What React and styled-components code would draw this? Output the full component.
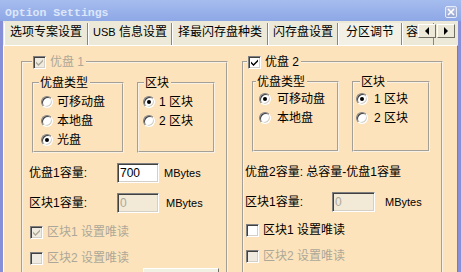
import React from "react";
import styled, { createGlobalStyle } from "styled-components";

const GlobalStyle = createGlobalStyle`
  html, body {
    margin: 0;
    padding: 0;
  }
  body {
    font-family: "Liberation Sans", "Noto Sans CJK SC", sans-serif;
    font-size: 12px;
    color: #000;
    background: #ece9d8;
  }
`;

const Window = styled.div`
  width: 461px;
  height: 272px;
  overflow: hidden;
  display: flex;
  flex-direction: column;
  background: #ece9d8;
`;

const TitleBar = styled.div`
  height: 21px;
  flex-shrink: 0;
  display: flex;
  align-items: center;
  justify-content: space-between;
  padding: 0 4px 0 5px;
  background: linear-gradient(#a5bcee, #8ea8e6);
`;

const Title = styled.span`
  font-family: "Liberation Mono", monospace;
  font-weight: bold;
  font-size: 11.5px;
  line-height: 14px;
  color: #dde6fa;
  margin-top: 5px;
`;

const CloseButton = styled.div`
  width: 12px;
  height: 12px;
  margin-top: 3px;
  box-sizing: border-box;
  border: 1px solid #e4ebfa;
  border-radius: 2px;
  background: linear-gradient(#b7c3e5, #98a6d3);
  display: flex;
  align-items: center;
  justify-content: center;
`;

const Body = styled.div`
  flex: 1;
  display: flex;
  flex-direction: column;
  border-left: 3px solid #878fd9;
  border-right: 3px solid #878fd9;
  min-height: 0;
`;

const TabStrip = styled.div`
  position: relative;
  height: 24px;
  flex-shrink: 0;
  display: flex;
  padding-left: 1px;
  overflow: hidden;
`;

const Tab = styled.div`
  flex-shrink: 0;
  margin-top: 2px;
  height: 22px;
  line-height: 18px;
  padding: 0 ${(p) => p.$pad}px;
  border-left: 1px solid #fff;
  border-right: 1px solid #8a877b;
  white-space: nowrap;
  background: ${(p) => (p.$active ? "#f3f1e6" : "#ece9d8")};
`;

const Latin = styled.span`
  font-size: 11px;
`;

const TabArrows = styled.div`
  position: absolute;
  right: 3px;
  top: 3px;
  display: flex;
  gap: 1px;
`;

const ArrowButton = styled.div`
  width: 18px;
  height: 14px;
  box-sizing: border-box;
  background: #ece9d8;
  border: 1px solid;
  border-color: #fff #716f64 #716f64 #fff;
  display: flex;
  align-items: center;
  justify-content: center;
  &::after {
    content: "";
    border-top: 4px solid transparent;
    border-bottom: 4px solid transparent;
    border-${(p) => (p.$dir === "left" ? "right" : "left")}: 4px solid #000;
  }
`;

const Panel = styled.div`
  flex: 1;
  display: flex;
  align-items: flex-start;
  gap: 14px;
  padding: 9px 0 0 17px;
  background: #fde3bb;
  border-top: 1px solid #fff;
  border-left: 1px solid #fff;
  border-right: 1px solid #808080;
`;

const Group = styled.fieldset`
  box-sizing: border-box;
  width: ${(p) => p.$width}px;
  margin: 0;
  padding: 0 0 0 ${(p) => p.$pad}px;
  border: 2px groove #f8f2e6;
  min-width: 0;
  height: ${(p) => p.$height || "auto"};
`;

const Legend = styled.legend`
  font-size: 12px;
  line-height: 14px;
  padding: 0 2px 0 1px;
  margin-left: ${(p) => p.$offset || 0}px;
  color: ${(p) => (p.$disabled ? "#aca899" : "#000")};
  display: flex;
  align-items: center;
  gap: 4px;
`;

const InnerRow = styled.div`
  display: flex;
  gap: ${(p) => p.$gap}px;
  height: ${(p) => p.$height}px;
  margin: ${(p) => p.$mt}px 0 0 ${(p) => p.$ml}px;
`;

const InnerGroup = styled(Group)`
  padding: ${(p) => p.$top}px 0 0 ${(p) => p.$pad}px;
  height: 100%;
`;

const RadioRow = styled.div`
  height: 19px;
  display: flex;
  align-items: center;
  gap: ${(p) => p.$gap}px;
  line-height: 14px;
`;

const RadioMark = styled.span`
  position: relative;
  width: 12px;
  height: 12px;
  flex-shrink: 0;
  box-sizing: border-box;
  border-radius: 50%;
  border: 1px solid;
  border-color: #808080 #fff #fff #808080;
  box-shadow: inset 1px 1px 0 #404040, inset -1px -1px 0 #d4d0c8;
  background: #fff;
  &::after {
    content: "";
    display: ${(p) => (p.$checked ? "block" : "none")};
    position: absolute;
    left: 3px;
    top: 3px;
    width: 4px;
    height: 4px;
    border-radius: 50%;
    background: #000;
  }
`;

const FieldRow = styled.div`
  display: flex;
  align-items: center;
  height: ${(p) => p.$h || 20}px;
  margin-top: ${(p) => p.$mt}px;
  line-height: 14px;
  white-space: nowrap;
`;

const Label = styled.span`
  width: ${(p) => p.$w}px;
  flex-shrink: 0;
`;

const TextBox = styled.div`
  box-sizing: border-box;
  width: ${(p) => p.$w}px;
  height: 20px;
  line-height: 16px;
  border: 1px solid;
  border-color: #808080 #fff #fff #808080;
  box-shadow: inset 1px 1px 0 #404040, inset -1px -1px 0 #d4d0c8;
  background: ${(p) => (p.$disabled ? "#f3e9d7" : "#fff")};
  color: ${(p) => (p.$disabled ? "#aca899" : "#000")};
  padding: 1px 0 0 2px;
`;

const Unit = styled.span`
  font-size: 11px;
  margin-left: ${(p) => p.$ml}px;
`;

const CheckRow = styled.div`
  display: flex;
  align-items: center;
  gap: 4px;
  height: 18px;
  padding-left: 1px;
  margin-top: ${(p) => p.$mt}px;
  line-height: 14px;
  color: ${(p) => (p.$disabled ? "#aca899" : "#000")};
`;

const CheckMark = styled.span`
  width: 13px;
  height: 13px;
  flex-shrink: 0;
  box-sizing: border-box;
  border: 1px solid;
  border-color: #808080 #fff #fff #808080;
  box-shadow: inset 1px 1px 0 #404040, inset -1px -1px 0 #d4d0c8;
  background: ${(p) => (p.$disabled ? "#efebe0" : "#fff")};
  display: flex;
  align-items: center;
  justify-content: center;
  svg {
    display: block;
  }
`;

const Button = styled.div`
  width: 76px;
  height: 22px;
  margin: 1px 0 0 114px;
  box-sizing: border-box;
  border: 1px solid;
  border-color: #fff #716f64 #716f64 #fff;
  background: #f2efe3;
`;

const Check = ({ checked, disabled }) => (
  <CheckMark $disabled={disabled}>
    {checked && (
      <svg width="9" height="9" viewBox="0 0 9 9">
        <path d="M1 3.5 L3.5 6 L8 1.5 L8 3.5 L3.5 8 L1 5.5 Z" fill={disabled ? "#aca899" : "#000"} />
      </svg>
    )}
  </CheckMark>
);

const Radio = ({ checked, gap, children }) => (
  <RadioRow $gap={gap}>
    <RadioMark $checked={checked} />
    <span>{children}</span>
  </RadioRow>
);

const tabs = [
  { label: "选项专案设置", pad: 5 },
  { label: <><Latin>USB</Latin> 信息设置</>, pad: 4 },
  { label: "择最闪存盘种类", pad: 5 },
  { label: "闪存盘设置", pad: 4 },
  { label: "分区调节", pad: 7, active: true },
  { label: "容量", pad: 3 },
];

const App = () => {
  return (
    <>
      <GlobalStyle />
      <Window>
        <TitleBar>
          <Title>Option Settings</Title>
          <CloseButton>
            <svg width="8" height="8" viewBox="0 0 8 8">
              <path d="M1 1 L7 7 M7 1 L1 7" stroke="#fff" strokeWidth="1.6" />
            </svg>
          </CloseButton>
        </TitleBar>
        <Body>
          <TabStrip>
            {tabs.map((t, i) => (
              <Tab key={i} $pad={t.pad} $active={t.active}>
                {t.label}
              </Tab>
            ))}
            <TabArrows>
              <ArrowButton $dir="left" />
              <ArrowButton $dir="right" />
            </TabArrows>
          </TabStrip>
          <Panel>
            <Group $width={207} $pad={6} $height="260px">
              <Legend $offset={3} $disabled>
                <Check checked disabled />
                优盘 1
              </Legend>
              <InnerRow $gap={13} $height={77} $mt={7} $ml={3}>
                <InnerGroup $width={92} $pad={7} $top={2}>
                  <Legend $offset={-2}>优盘类型</Legend>
                  <Radio gap={4}>可移动盘</Radio>
                  <Radio gap={4}>本地盘</Radio>
                  <Radio gap={4} checked>
                    光盘
                  </Radio>
                </InnerGroup>
                <InnerGroup $width={78} $pad={4} $top={2}>
                  <Legend $offset={1}>区块</Legend>
                  <Radio gap={4} checked>
                    1 区块
                  </Radio>
                  <Radio gap={4}>2 区块</Radio>
                </InnerGroup>
              </InnerRow>
              <FieldRow $mt={10}>
                <Label $w={88}>优盘1容量:</Label>
                <TextBox $w={42}>700</TextBox>
                <Unit $ml={5}>MBytes</Unit>
              </FieldRow>
              <FieldRow $mt={10}>
                <Label $w={88}>区块1容量:</Label>
                <TextBox $w={42} $disabled>
                  0
                </TextBox>
                <Unit $ml={7}>MBytes</Unit>
              </FieldRow>
              <CheckRow $mt={10} $disabled>
                <Check checked disabled />
                区块1 设置唯读
              </CheckRow>
              <CheckRow $mt={8} $disabled>
                <Check disabled />
                区块2 设置唯读
              </CheckRow>
              <Button />
            </Group>
            <Group $width={201} $pad={1} $height="260px">
              <Legend $offset={2}>
                <Check checked />
                优盘 2
              </Legend>
              <InnerRow $gap={13} $height={77} $mt={6} $ml={7}>
                <InnerGroup $width={87} $pad={5} $top={0}>
                  <Legend $offset={-3}>优盘类型</Legend>
                  <Radio gap={6} checked>
                    可移动盘
                  </Radio>
                  <Radio gap={6}>本地盘</Radio>
                </InnerGroup>
                <InnerGroup $width={78} $pad={2} $top={0}>
                  <Legend $offset={4}>区块</Legend>
                  <Radio gap={6} checked>
                    1 区块
                  </Radio>
                  <Radio gap={6}>2 区块</Radio>
                </InnerGroup>
              </InnerRow>
              <FieldRow $mt={10}>
                <Label $w={200}>优盘2容量: 总容量-优盘1容量</Label>
              </FieldRow>
              <FieldRow $mt={10}>
                <Label $w={87}>区块1容量:</Label>
                <TextBox $w={43} $disabled>
                  0
                </TextBox>
                <Unit $ml={10}>MBytes</Unit>
              </FieldRow>
              <CheckRow $mt={9}>
                <Check />
                区块1 设置唯读
              </CheckRow>
              <CheckRow $mt={8} $disabled>
                <Check disabled />
                区块2 设置唯读
              </CheckRow>
            </Group>
          </Panel>
        </Body>
      </Window>
    </>
  );
};

export default App;
